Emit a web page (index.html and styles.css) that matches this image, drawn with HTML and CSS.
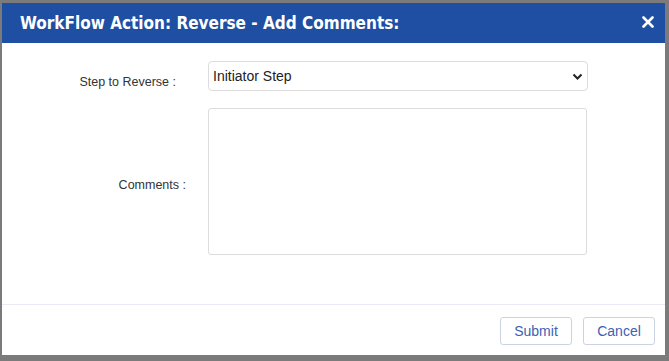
FILE: index.html
```html
<!DOCTYPE html>
<html>
<head>
  <title>WorkFlow Action</title>
  <link rel="stylesheet" href="styles.css">
</head>
<body>
  <div class="modal">
    <div class="modal-header">
      <span class="modal-title">WorkFlow Action: Reverse - Add Comments:</span>
      <svg class="modal-close" width="12" height="12" viewBox="0 0 12 12">
        <path d="M1.5 1.5 L10.5 10.5 M10.5 1.5 L1.5 10.5" stroke="#fff" stroke-width="2.6" stroke-linecap="round"/>
      </svg>
    </div>
    <div class="modal-body">
      <div class="form-row">
        <label class="form-label label-step">Step to Reverse :</label>
        <div class="select-box">
          <span>Initiator Step</span>
          <svg class="chevron" width="11" height="8" viewBox="0 0 11 8">
            <path d="M1.5 1.5 L5.5 5.5 L9.5 1.5" fill="none" stroke="#222" stroke-width="2"/>
          </svg>
        </div>
      </div>
      <div class="form-row">
        <label class="form-label label-comments">Comments :</label>
        <div class="textarea-box"></div>
      </div>
    </div>
    <div class="modal-footer">
      <button class="btn">Submit</button>
      <button class="btn">Cancel</button>
    </div>
  </div>
</body>
</html>
```

FILE: styles.css
```css
html, body {
  height: 100%;
}

body {
  margin: 0;
  padding: 3px 4px 6px 2px;
  box-sizing: border-box;
  background-color: #7b7b7b;
  font-family: "Liberation Sans", Arial, sans-serif;
}

.modal {
  height: 100%;
  background-color: #fff;
  display: flex;
  flex-direction: column;
}

.modal-header {
  height: 40px;
  background-color: #1f4fa3;
  color: #fff;
  display: flex;
  align-items: center;
  justify-content: space-between;
  padding: 0 11px 0 18px;
}

.modal-title {
  font-family: "DejaVu Sans Condensed", "DejaVu Sans", sans-serif;
  font-weight: bold;
  font-size: 17px;
}

.modal-close {
  margin-top: -3px;
}

.modal-body {
  flex: 1;
  padding-top: 18px;
  display: flex;
  flex-direction: column;
  gap: 17px;
}

.form-row {
  display: flex;
  align-items: center;
}

.form-label {
  width: 184px;
  text-align: right;
  font-size: 12.5px;
  color: #333;
}

.label-step {
  width: 174px;
  padding-right: 10px;
  padding-top: 11px;
}

.label-comments {
  padding-top: 6px;
}

.select-box {
  margin-left: 22px;
  width: 380px;
  height: 30px;
  box-sizing: border-box;
  border: 1px solid #dcdcdc;
  border-radius: 4px;
  display: flex;
  align-items: center;
  justify-content: space-between;
  padding: 0 4px;
  font-size: 14px;
  color: #222;
}

.chevron {
  margin-top: 1px;
}

.textarea-box {
  margin-left: 22px;
  width: 379px;
  height: 147px;
  box-sizing: border-box;
  border: 1px solid #dcdcdc;
  border-radius: 3px;
}

.modal-footer {
  border-top: 1px solid #eaeaf6;
  height: 50px;
  display: flex;
  align-items: center;
  justify-content: flex-end;
  gap: 11px;
  padding-right: 10px;
}

.btn {
  width: 72px;
  height: 28px;
  margin-top: 1px;
  background-color: #fff;
  border: 1px solid #ccd3e0;
  border-radius: 3px;
  color: #3b62b5;
  font-family: "Liberation Sans", Arial, sans-serif;
  font-size: 14px;
}
```
